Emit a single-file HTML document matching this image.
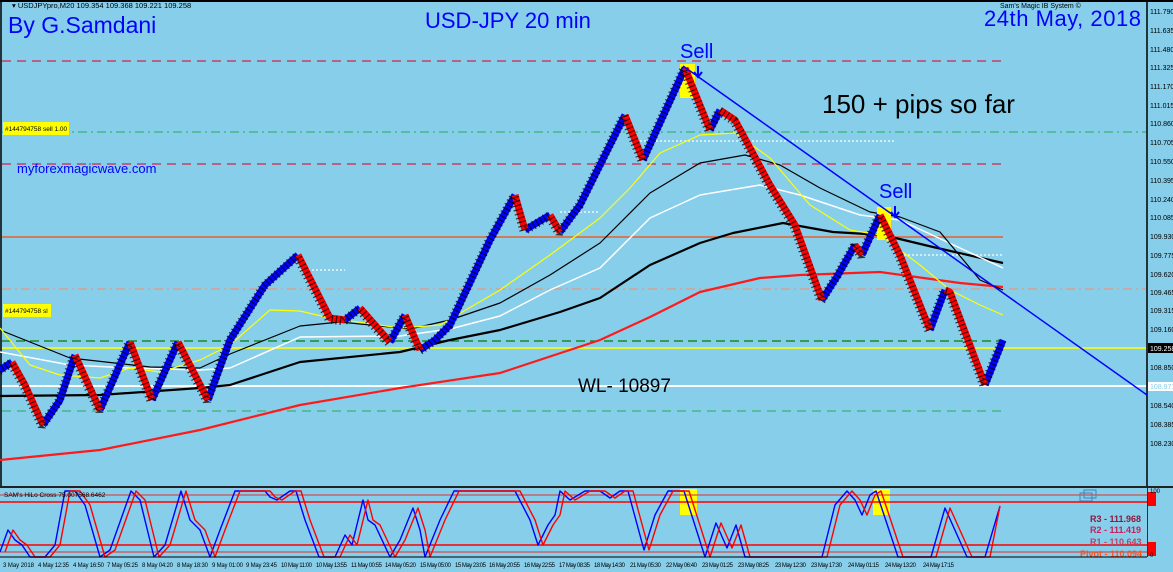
<!DOCTYPE html>
<html><head><meta charset="utf-8"><style>
html,body{margin:0;padding:0;background:#87CEEB;}
svg{display:block;font-family:"Liberation Sans",sans-serif;}
</style></head><body>
<svg width="1173" height="572" viewBox="0 0 1173 572" xmlns="http://www.w3.org/2000/svg">
<rect width="1173" height="572" fill="#87CEEB"/>
<line x1="0" y1="1" x2="1173" y2="1" stroke="#000" stroke-width="2"/>
<line x1="1" y1="0" x2="1" y2="557" stroke="#000" stroke-width="1.5"/>
<line x1="1147" y1="0" x2="1147" y2="557" stroke="#000" stroke-width="1.5"/>
<g stroke-width="1.2" fill="none">
<line x1="2" y1="61" x2="1003" y2="61" stroke="#D2244A" stroke-dasharray="9,6"/>
<line x1="2" y1="132" x2="1146" y2="132" stroke="#3CB371" stroke-dasharray="9,4,2,4"/>
<line x1="2" y1="164" x2="1003" y2="164" stroke="#D2244A" stroke-dasharray="9,6"/>
<line x1="2" y1="237" x2="1003" y2="237" stroke="#E8602C" stroke-width="1.5"/>
<line x1="2" y1="289" x2="1146" y2="289" stroke="#E9967A" stroke-dasharray="9,4,2,4"/>
<line x1="2" y1="341" x2="1003" y2="341" stroke="#008000" stroke-dasharray="9,5"/>
<line x1="2" y1="348" x2="1146" y2="348" stroke="#FFFF00" stroke-width="1.5"/>
<line x1="2" y1="386" x2="1146" y2="386" stroke="#FFFFFF" stroke-width="2"/>
<line x1="2" y1="411" x2="1003" y2="411" stroke="#3CB371" stroke-dasharray="9,6"/>
<line x1="560" y1="212" x2="600" y2="212" stroke="#fff" stroke-dasharray="2,2"/>
<line x1="640" y1="141" x2="895" y2="141" stroke="#fff" stroke-dasharray="2,2"/>
<line x1="300" y1="270" x2="345" y2="270" stroke="#fff" stroke-dasharray="2,2"/>
<line x1="900" y1="255" x2="1003" y2="255" stroke="#fff" stroke-dasharray="2,2"/>
</g>
<g fill="none" stroke-linejoin="round">
<polyline stroke="#FF1A1A" stroke-width="2.2" points="0,460 100,450 200,430 300,405 400,388 500,373 600,340 650,317 700,292 760,278 800,275 880,272 960,283 1003,287"/>
<polyline stroke="#000" stroke-width="2.2" points="0,396 100,395 200,388 230,385 300,362 400,352 450,340 500,330 560,312 600,298 650,265 700,243 733,233 783,223 833,232 883,235 933,247 1003,263"/>
<polyline stroke="#fff" stroke-width="1.5" points="0,352 70,365 130,368 200,370 230,368 300,337 400,336 450,329 500,316 550,290 600,268 650,218 700,195 760,185 800,195 860,215 900,220 960,248 1003,268"/>
<polyline stroke="#000" stroke-width="1.2" points="0,330 70,358 150,367 200,368 230,354 300,326 340,322 410,329 450,320 500,303 550,275 600,243 650,193 700,163 745,155 780,165 820,188 870,212 900,217 940,232 980,280 1003,290"/>
<polyline stroke="#FFFF00" stroke-width="1.2" points="0,328 30,365 60,375 100,378 130,368 160,372 200,360 230,345 270,310 300,311 330,318 400,328 440,325 500,290 550,255 600,218 630,188 660,153 700,135 735,133 770,158 810,205 850,230 880,235 920,265 950,290 980,305 1003,315"/>
</g>
<rect x="680" y="64" width="15" height="34" fill="#FFFF00"/>
<rect x="877" y="207" width="14" height="33" fill="#FFFF00"/>
<g fill="none" stroke-linejoin="bevel">
<path stroke="#0000FF" stroke-width="7" d="M0 370L12 362 M43 425L60 400L75 355 M100 410L130 342 M152 400L178 342 M208 400L230 340L265 285L298 255 M345 320L360 308 M390 342L405 315 M420 350L435 340L450 325L490 240L515 195 M525 230L550 215 M560 232L580 205L625 115 M643 160L685 68 M710 130L720 110 M822 300L838 275L855 245 M862 255L880 215 M930 330L945 290 M985 385L1003 340"/>
<path stroke="#FF0000" stroke-width="7" d="M12 362L25 385L43 425 M75 355L100 410 M130 342L152 400 M178 342L208 400 M298 255L330 318L345 320 M360 308L375 325L390 342 M405 315L420 350 M515 195L525 230 M550 215L560 232 M625 115L643 160 M685 68L710 130 M720 110L735 120L770 185L795 225L822 300 M855 245L862 255 M880 215L900 255L930 330 M945 290L950 292L985 385"/>
<polyline stroke="#000" stroke-width="9" stroke-dasharray="1.2,3" opacity="0.75" transform="translate(-1,1)" points="0,370 12,362 25,385 43,425 60,400 75,355 100,410 130,342 152,400 178,342 208,400 230,340 265,285 298,255 330,318 345,320 360,308 375,325 390,342 405,315 420,350 435,340 450,325 490,240 515,195 525,230 550,215 560,232 580,205 625,115 643,160 685,68 710,130 720,110 735,120 770,185 795,225 822,300 838,275 855,245 862,255 880,215 900,255 930,330 945,290 950,292 985,385 1003,340"/>
</g>
<line x1="683" y1="66" x2="1147" y2="395" stroke="#0000FF" stroke-width="1.5"/>
<path d="M698 66v10M694 72l4 5 4-5" stroke="#0000FF" stroke-width="2" fill="none"/>
<path d="M895 206v10M891 212l4 5 4-5" stroke="#0000FF" stroke-width="2" fill="none"/>
<rect x="3" y="122" width="66" height="13" fill="#FFFF00"/>
<text x="5" y="131" font-size="6.5" fill="#000">#144794758 sell 1.00</text>
<rect x="3" y="304" width="48" height="13" fill="#FFFF00"/>
<text x="5" y="313" font-size="6.5" fill="#000">#144794758 sl</text>
<text x="12" y="8" font-size="7.5" fill="#000">▾ USDJPYpro,M20  109.354 109.368 109.221 109.258</text>
<text x="1000" y="8" font-size="7" fill="#000">Sam's Magic IB System ©</text>
<text x="8" y="33" font-size="23" fill="#0000FF">By G.Samdani</text>
<text x="425" y="28" font-size="22" fill="#0000FF">USD-JPY  20 min</text>
<text x="984" y="26" font-size="22" fill="#0000FF" textLength="157">24th May, 2018</text>
<text x="17" y="173" font-size="13" fill="#0000FF">myforexmagicwave.com</text>
<text x="680" y="58" font-size="20" fill="#0000FF">Sell</text>
<text x="879" y="198" font-size="20" fill="#0000FF">Sell</text>
<text x="822" y="113" font-size="26" fill="#000">150 + pips so far</text>
<text x="578" y="392" font-size="19" fill="#000">WL- 10897</text>
<text x="72" y="500" font-size="19" fill="#000">WL- 10921</text>
<g font-size="7" fill="#000">
<text x="1150" y="14">111.790</text><text x="1150" y="33">111.635</text><text x="1150" y="52">111.480</text><text x="1150" y="70">111.325</text><text x="1150" y="89">111.170</text><text x="1150" y="108">111.015</text><text x="1150" y="126">110.860</text><text x="1150" y="145">110.705</text><text x="1150" y="164">110.550</text><text x="1150" y="183">110.395</text><text x="1150" y="202">110.240</text><text x="1150" y="220">110.085</text><text x="1150" y="239">109.930</text><text x="1150" y="258">109.775</text><text x="1150" y="277">109.620</text><text x="1150" y="295">109.465</text><text x="1150" y="313">109.315</text><text x="1150" y="332">109.160</text><text x="1150" y="370">108.850</text><text x="1150" y="408">108.540</text><text x="1150" y="427">108.385</text><text x="1150" y="446">108.230</text>
</g>
<rect x="1148" y="343" width="25" height="10" fill="#000"/>
<text x="1150" y="351" font-size="7" fill="#fff">109.258</text>
<rect x="1148" y="382" width="25" height="9" fill="#fff"/>
<text x="1150" y="389" font-size="7" fill="#87CEEB">108.971</text>
<rect x="0" y="488" width="1147" height="70" fill="#87CEEB"/>
<line x1="0" y1="487" x2="1173" y2="487" stroke="#222" stroke-width="2"/>
<rect x="680" y="489" width="17" height="26" fill="#FFFF00"/>
<rect x="873" y="489" width="17" height="26" fill="#FFFF00"/>
<g stroke-width="1.2">
<line x1="0" y1="495" x2="1147" y2="495" stroke="#D05050"/>
<line x1="0" y1="502" x2="1147" y2="502" stroke="#FF0000" stroke-width="1.5"/>
<line x1="0" y1="545" x2="1147" y2="545" stroke="#FF0000" stroke-width="1.5"/>
<line x1="0" y1="552" x2="1147" y2="552" stroke="#D05050"/>
</g>
<g fill="none" stroke-width="1.4" stroke-linejoin="round">
<polyline stroke="#0000FF" points="0,552 8,530 15,540 22,545 30,557 45,557 55,545 65,491 75,491 85,505 100,557 110,550 131,491 140,500 154,557 165,545 181,491 190,520 200,530 210,557 220,530 235,491 265,491 270,497 277,500 290,491 296,491 305,520 319,557 335,557 345,535 352,545 363,500 368,520 375,525 390,557 400,540 413,508 420,530 425,557 440,520 454,491 515,491 530,520 538,545 548,525 555,515 560,491 570,500 585,491 600,491 610,498 620,491 628,491 644,550 655,515 668,491 684,491 705,557 716,523 727,548 736,525 745,557 822,557 835,505 847,491 855,500 862,515 870,495 876,491 898,557 931,557 945,508 967,557 985,557 1000,506"/>
<polyline stroke="#FF0000" transform="translate(5,0)" points="0,552 8,530 15,540 22,545 30,557 45,557 55,545 65,491 75,491 85,505 100,557 110,550 131,491 140,500 154,557 165,545 181,491 190,520 200,530 210,557 220,530 235,491 265,491 270,497 277,500 290,491 296,491 305,520 319,557 335,557 345,535 352,545 363,500 368,520 375,525 390,557 400,540 413,508 420,530 425,557 440,520 454,491 515,491 530,520 538,545 548,525 555,515 560,491 570,500 585,491 600,491 610,498 620,491 628,491 644,550 655,515 668,491 684,491 705,557 716,523 727,548 736,525 745,557 822,557 835,505 847,491 855,500 862,515 870,495 876,491 898,557 931,557 945,508 967,557 985,557 995,506"/>
</g>
<text x="4" y="497" font-size="6.5" fill="#000">SAM's HiLo Cross 75.007568.6462</text>
<rect x="1080" y="493" width="12" height="8" fill="none" stroke="#4682B4"/>
<rect x="1084" y="490" width="12" height="8" fill="none" stroke="#4682B4"/>
<g font-size="9" font-weight="bold">
<text x="1090" y="522" fill="#8B1A3A">R3 - 111.968</text>
<text x="1090" y="533" fill="#C71F5A">R2 - 111.419</text>
<text x="1090" y="545" fill="#C04060">R1 - 110.643</text>
<text x="1080" y="557" fill="#FF5020">Pivot - 110.094</text>
</g>
<rect x="1148" y="492" width="8" height="7" fill="#FF0000"/><rect x="1148" y="499" width="8" height="7" fill="#FF0000"/>
<rect x="1148" y="542" width="8" height="7" fill="#FF0000"/><rect x="1148" y="549" width="8" height="7" fill="#FF0000"/>
<text x="1150" y="493" font-size="6" fill="#000">100</text>
<text x="1150" y="557" font-size="6" fill="#000">0</text>
<line x1="0" y1="557" x2="1147" y2="557" stroke="#000" stroke-width="1"/>
<g font-size="6" fill="#000">
<text x="3" y="567" textLength="31">3 May 2018</text><text x="38" y="567" textLength="31">4 May 12:35</text><text x="73" y="567" textLength="31">4 May 16:50</text><text x="107" y="567" textLength="31">7 May 05:25</text><text x="142" y="567" textLength="31">8 May 04:20</text><text x="177" y="567" textLength="31">8 May 18:30</text><text x="212" y="567" textLength="31">9 May 01:00</text><text x="246" y="567" textLength="31">9 May 23:45</text><text x="281" y="567" textLength="31">10 May 11:00</text><text x="316" y="567" textLength="31">10 May 13:55</text><text x="351" y="567" textLength="31">11 May 00:55</text><text x="385" y="567" textLength="31">14 May 05:20</text><text x="420" y="567" textLength="31">15 May 05:00</text><text x="455" y="567" textLength="31">15 May 23:05</text><text x="489" y="567" textLength="31">16 May 20:55</text><text x="524" y="567" textLength="31">16 May 22:55</text><text x="559" y="567" textLength="31">17 May 08:35</text><text x="594" y="567" textLength="31">18 May 14:30</text><text x="630" y="567" textLength="31">21 May 05:30</text><text x="666" y="567" textLength="31">22 May 06:40</text><text x="702" y="567" textLength="31">23 May 01:25</text><text x="738" y="567" textLength="31">23 May 08:25</text><text x="775" y="567" textLength="31">23 May 12:30</text><text x="811" y="567" textLength="31">23 May 17:30</text><text x="848" y="567" textLength="31">24 May 01:15</text><text x="885" y="567" textLength="31">24 May 13:20</text><text x="923" y="567" textLength="31">24 May 17:15</text>
</g>
</svg>
</body></html>
